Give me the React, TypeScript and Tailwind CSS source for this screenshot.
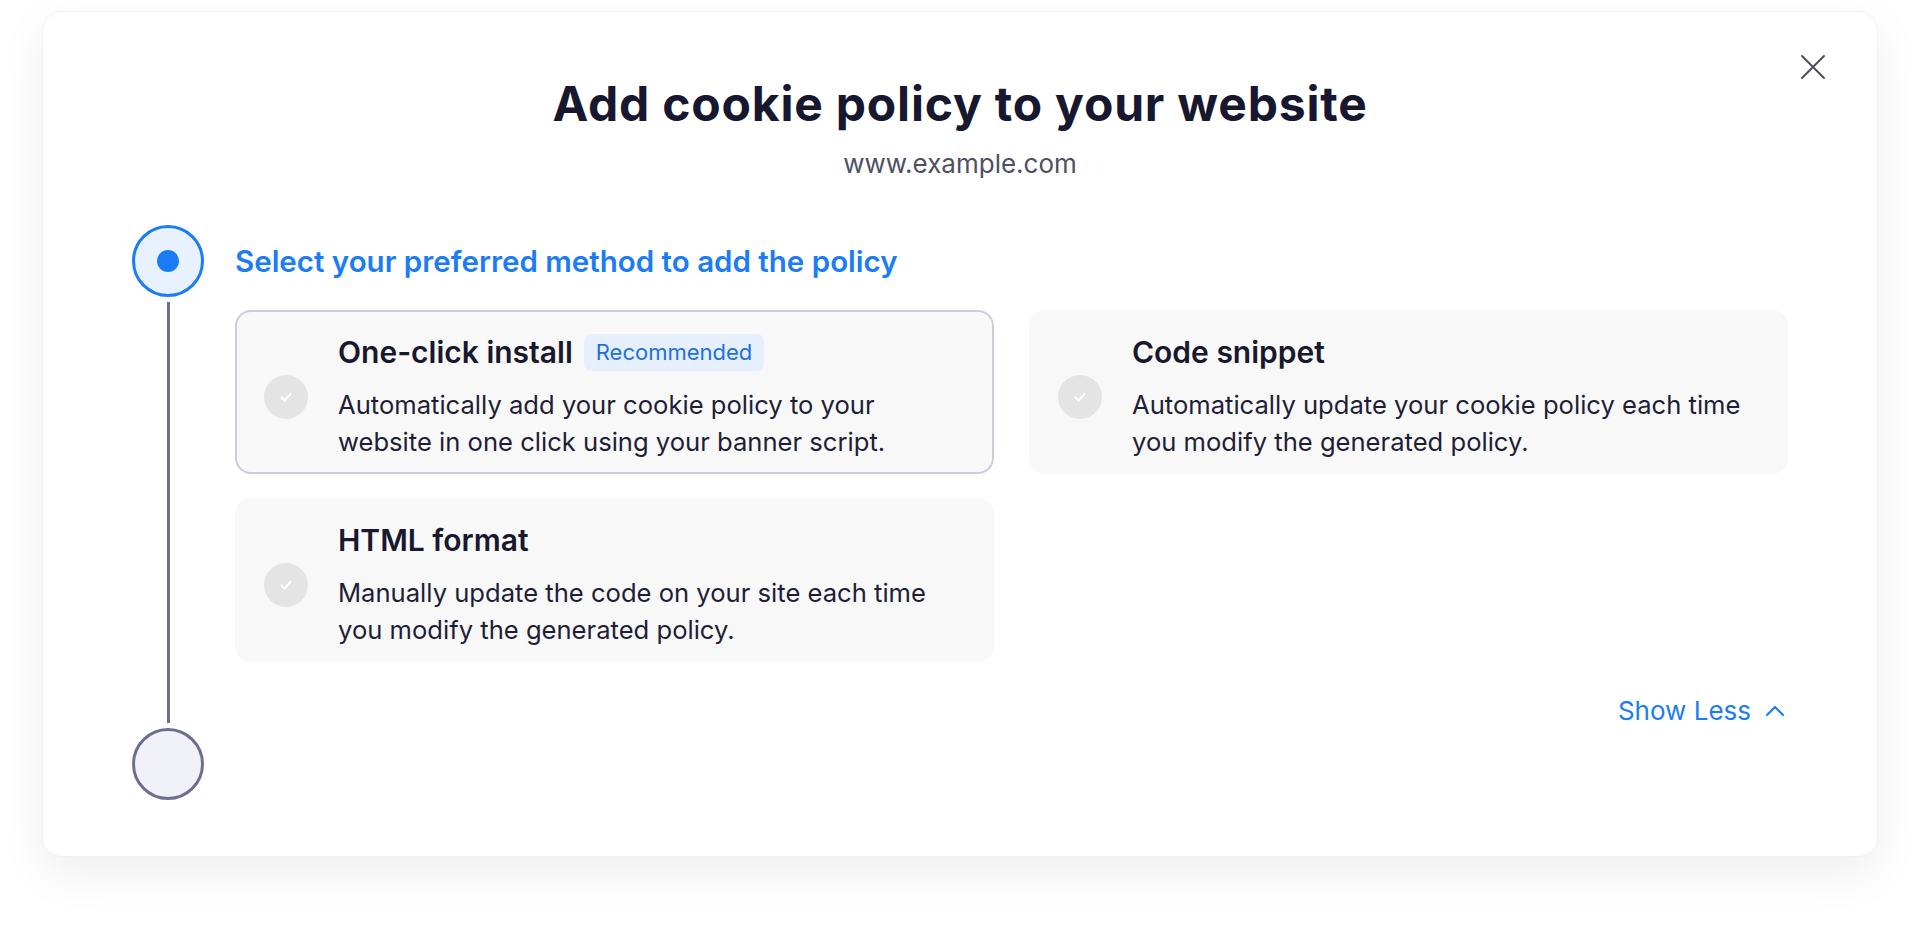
import { ChevronUp } from "lucide-react";

const methods = [
  {
    title: "One-click install",
    badge: "Recommended",
    text: "Automatically add your cookie policy to your website in one click using your banner script.",
    selected: true,
  },
  {
    title: "Code snippet",
    text: "Automatically update your cookie policy each time you modify the generated policy.",
  },
  {
    title: "HTML format",
    text: "Manually update the code on your site each time you modify the generated policy.",
  },
];

function CheckDot() {
  return (
    <div className="w-[44px] h-[44px] shrink-0 rounded-full bg-[#e4e4e4] flex items-center justify-center">
      <svg width="16" height="16" viewBox="0 0 16 16" fill="none">
        <path d="M3.5 8.5l3 3 6-6.5" stroke="white" strokeWidth="2.2" strokeLinecap="round" strokeLinejoin="round" />
      </svg>
    </div>
  );
}

function MethodCard({ title, badge, text, selected }: { title: string; badge?: string; text: string; selected?: boolean }) {
  return (
    <div
      className={
        "flex items-center gap-[30px] rounded-[16px] bg-[#f8f8f8] border-2 pl-[27px] pr-[24px] pt-[22px] pb-[12px] " +
        (selected ? "border-[#cacce0]" : "border-transparent")
      }
    >
      <CheckDot />
      <div className="flex flex-col">
        <div className="flex items-center gap-[11px] h-[36px]">
          <span className="text-[30px] leading-[36px] font-semibold text-[#18182f]">{title}</span>
          {badge && (
            <span className="bg-[#e6f0fd] text-[#1f6fdc] text-[22px] leading-[37px] px-[12px] rounded-[7px]">{badge}</span>
          )}
        </div>
        <p className="mt-[16px] text-[25.6px] leading-[37px] text-[#1e1e36]">{text}</p>
      </div>
    </div>
  );
}

export default function App() {
  return (
    <div className="min-h-screen bg-white px-[42px] pt-[11px] font-[Inter,sans-serif]">
      <div className="relative bg-white rounded-[20px] border border-[#f1f1f3] shadow-[0_16px_48px_rgba(20,20,40,0.07)] h-[846px] px-[89px]">
        <button className="absolute top-[42px] right-[51px] text-[#4b4b5f]">
          <svg width="26" height="26" viewBox="0 0 26 26" fill="none">
            <path d="M2 2l22 22M24 2L2 24" stroke="currentColor" strokeWidth="1.9" strokeLinecap="round" />
          </svg>
        </button>

        <h1 className="pt-[64px] text-center text-[48px] leading-[56px] font-bold text-[#17172f] tracking-[0.8px]">
          Add cookie policy to your website
        </h1>
        <p className="mt-[16px] text-center text-[26px] leading-[32px] text-[#4e5064]">www.example.com</p>

        <div className="flex gap-[31px] mt-[45px]">
          {/* stepper rail */}
          <div className="flex flex-col items-center w-[72px] shrink-0">
            <div className="w-[72px] h-[72px] rounded-full border-[3px] border-[#1b7cf6] bg-[#e8f1fe] flex items-center justify-center">
              <div className="w-[22px] h-[22px] rounded-full bg-[#1b7cf6]" />
            </div>
            <div className="w-[3px] h-[421px] my-[5px] bg-[#6c6e92]" />
            <div className="w-[72px] h-[72px] rounded-full border-[3px] border-[#6c6e92] bg-[#f0f2f8]" />
          </div>

          <div className="flex-1">
            <div className="h-[72px] flex items-center">
              <h2 className="text-[29.5px] font-semibold text-[#1b7cf6]">Select your preferred method to add the policy</h2>
            </div>

            <div className="grid grid-cols-2 gap-x-[35px] gap-y-[24px] mt-[13px]">
              {methods.map((m) => (
                <MethodCard key={m.title} {...m} />
              ))}
            </div>

            <div className="flex justify-end mt-[33px] mr-[-3px]">
              <button className="flex items-center gap-[8px] text-[26px] leading-[32px] text-[#1b7cf6]">
                Show Less
                <ChevronUp size={32} strokeWidth={1.6} />
              </button>
            </div>
          </div>
        </div>
      </div>
    </div>
  );
}
